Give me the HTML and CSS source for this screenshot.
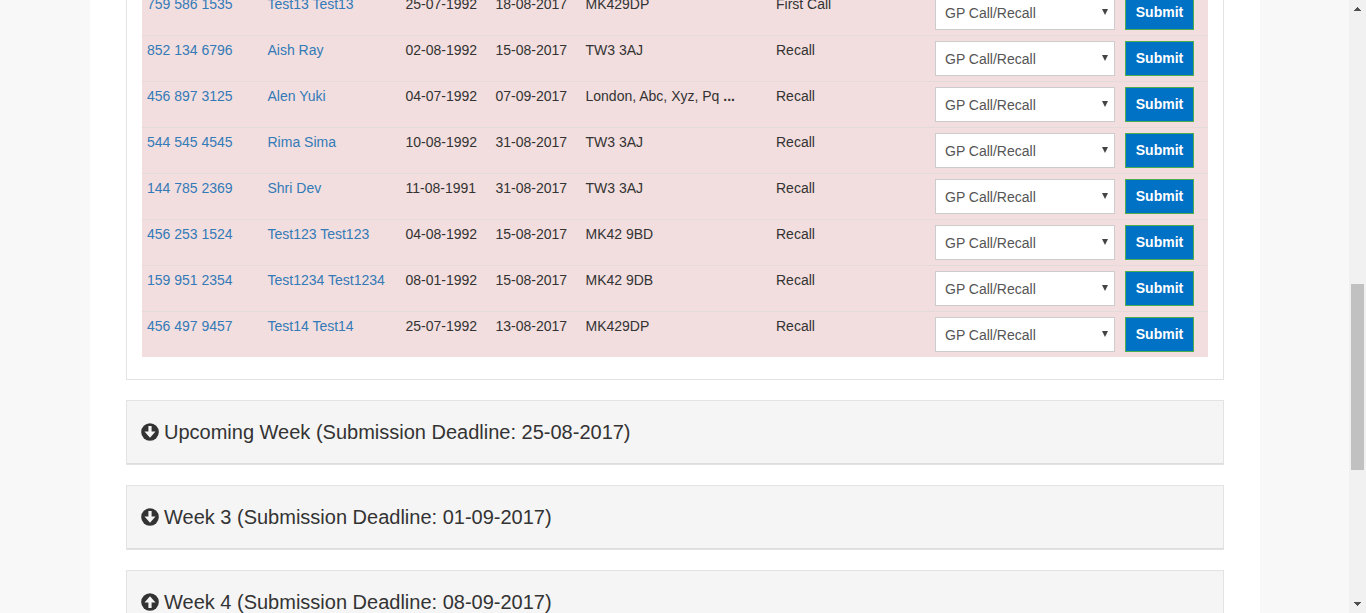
FILE: index.html
```html
<!DOCTYPE html>
<html lang="en">
<head>
<meta charset="utf-8">
<title>Submissions</title>
<link rel="stylesheet" href="styles.css">
</head>
<body>
<svg width="0" height="0" class="defs">
  <symbol id="arrow-down" viewBox="0 0 18 18">
    <circle cx="9" cy="9" r="8.8" fill="#333"/>
    <path d="M7.4 3h3.2v5.6h3.9L9 14.8 3.5 8.6h3.9z" fill="#f5f5f5"/>
  </symbol>
  <symbol id="arrow-up" viewBox="0 0 18 18">
    <circle cx="9" cy="9" r="8.8" fill="#333"/>
    <path d="M7.4 15h3.2V9.4h3.9L9 3.2 3.5 9.4h3.9z" fill="#f5f5f5"/>
  </symbol>
</svg>
<div class="page">
  <main class="content">
    <section class="panel panel-open">
      <div class="table">
        <div class="row"><a>759 586 1535</a><a>Test13 Test13</a><span>25-07-1992</span><span>18-08-2017</span><span>MK429DP</span><span>First Call</span><div class="select">GP Call/Recall<i class="caret"></i></div><button class="submit">Submit</button></div>
        <div class="row"><a>852 134 6796</a><a>Aish Ray</a><span>02-08-1992</span><span>15-08-2017</span><span>TW3 3AJ</span><span>Recall</span><div class="select">GP Call/Recall<i class="caret"></i></div><button class="submit">Submit</button></div>
        <div class="row"><a>456 897 3125</a><a>Alen Yuki</a><span>04-07-1992</span><span>07-09-2017</span><span>London, Abc, Xyz, Pq <b>...</b></span><span>Recall</span><div class="select">GP Call/Recall<i class="caret"></i></div><button class="submit">Submit</button></div>
        <div class="row"><a>544 545 4545</a><a>Rima Sima</a><span>10-08-1992</span><span>31-08-2017</span><span>TW3 3AJ</span><span>Recall</span><div class="select">GP Call/Recall<i class="caret"></i></div><button class="submit">Submit</button></div>
        <div class="row"><a>144 785 2369</a><a>Shri Dev</a><span>11-08-1991</span><span>31-08-2017</span><span>TW3 3AJ</span><span>Recall</span><div class="select">GP Call/Recall<i class="caret"></i></div><button class="submit">Submit</button></div>
        <div class="row"><a>456 253 1524</a><a>Test123 Test123</a><span>04-08-1992</span><span>15-08-2017</span><span>MK42 9BD</span><span>Recall</span><div class="select">GP Call/Recall<i class="caret"></i></div><button class="submit">Submit</button></div>
        <div class="row"><a>159 951 2354</a><a>Test1234 Test1234</a><span>08-01-1992</span><span>15-08-2017</span><span>MK42 9DB</span><span>Recall</span><div class="select">GP Call/Recall<i class="caret"></i></div><button class="submit">Submit</button></div>
        <div class="row"><a>456 497 9457</a><a>Test14 Test14</a><span>25-07-1992</span><span>13-08-2017</span><span>MK429DP</span><span>Recall</span><div class="select">GP Call/Recall<i class="caret"></i></div><button class="submit">Submit</button></div>
      </div>
    </section>
    <section class="panel"><h4 class="heading"><svg class="icon"><use href="#arrow-down"/></svg>Upcoming Week (Submission Deadline: 25-08-2017)</h4></section>
    <section class="panel"><h4 class="heading"><svg class="icon"><use href="#arrow-down"/></svg>Week 3 (Submission Deadline: 01-09-2017)</h4></section>
    <section class="panel"><h4 class="heading"><svg class="icon"><use href="#arrow-up"/></svg>Week 4 (Submission Deadline: 08-09-2017)</h4></section>
  </main>
  <div class="scrollbar">
    <svg class="scroll-arrow" viewBox="0 0 7 4" shape-rendering="crispEdges"><path d="M3 0h1v1h1v1h1v1h1v1H0V3h1V2h1V1h1z" fill="#505050"/></svg>
    <div class="thumb"></div>
    <svg class="scroll-arrow" viewBox="0 0 7 4" shape-rendering="crispEdges"><path d="M0 0h7v1H6v1H5v1H4v1H3V3H2V2H1V1H0z" fill="#505050"/></svg>
  </div>
</div>
</body>
</html>
```
FILE: styles.css
```css
* { box-sizing: border-box; }
body {
  margin: 0;
  overflow: hidden;
  background: #f8f8f8;
  font: 14px/20px "Liberation Sans", Arial, sans-serif;
  color: #333;
}
.defs { display: none; }
.page {
  display: flex;
  justify-content: space-between;
  height: 613px;
  padding-left: 90px;
  overflow: hidden;
}
.content {
  display: flex;
  flex-direction: column;
  gap: 20px;
  width: 1170px;
  padding: 0 36px;
  background: #fff;
}
.panel {
  flex: none;
  border: 1px solid #e3e3e3;
  background: #fff;
}
.panel-open {
  height: 380px;
  border-top: 0;
  padding: 0 15px;
}
.table { margin-top: -11px; }
.row {
  display: grid;
  grid-template-columns: 120.5px 138px 90px 90px 190.5px 159px 190px 69px;
  height: 46px;
  padding: 5px;
  border-top: 1px solid #e3dada;
  background: #f2dede;
}
.row a { color: #337ab7; }
.row > a, .row > span { margin-top: -1px; }
.select {
  display: flex;
  justify-content: space-between;
  width: 180px;
  height: 35px;
  padding: 7px 6px 0 9px;
  border: 1px solid #ccc;
  background: #fff;
  color: #555;
}
.caret {
  width: 6px;
  height: 6px;
  margin-top: 6px;
  background: #444;
  clip-path: polygon(0 0, 100% 0, 50% 100%);
}
.submit {
  height: 35px;
  padding: 0 0 1px;
  border: 1px solid #4cae4c;
  background: #0072c6;
  color: #fff;
  font: bold 14px/20px "Liberation Sans", Arial, sans-serif;
}
.heading {
  display: flex;
  align-items: center;
  gap: 5px;
  height: 63px;
  margin: 0;
  padding: 0 14px;
  border-bottom: 1px solid #ddd;
  background: #f5f5f5;
  font-size: 20px;
  font-weight: 400;
  line-height: 22px;
}
.icon { width: 18px; height: 18px; }
.scrollbar {
  display: flex;
  flex-direction: column;
  align-items: center;
  justify-content: space-between;
  width: 17px;
  padding: 7px 0;
  background: #f1f1f1;
}
.scroll-arrow { width: 7px; height: 4px; }
.thumb {
  width: 13px;
  height: 186px;
  margin-top: 140px;
  background: #c1c1c1;
}
```
